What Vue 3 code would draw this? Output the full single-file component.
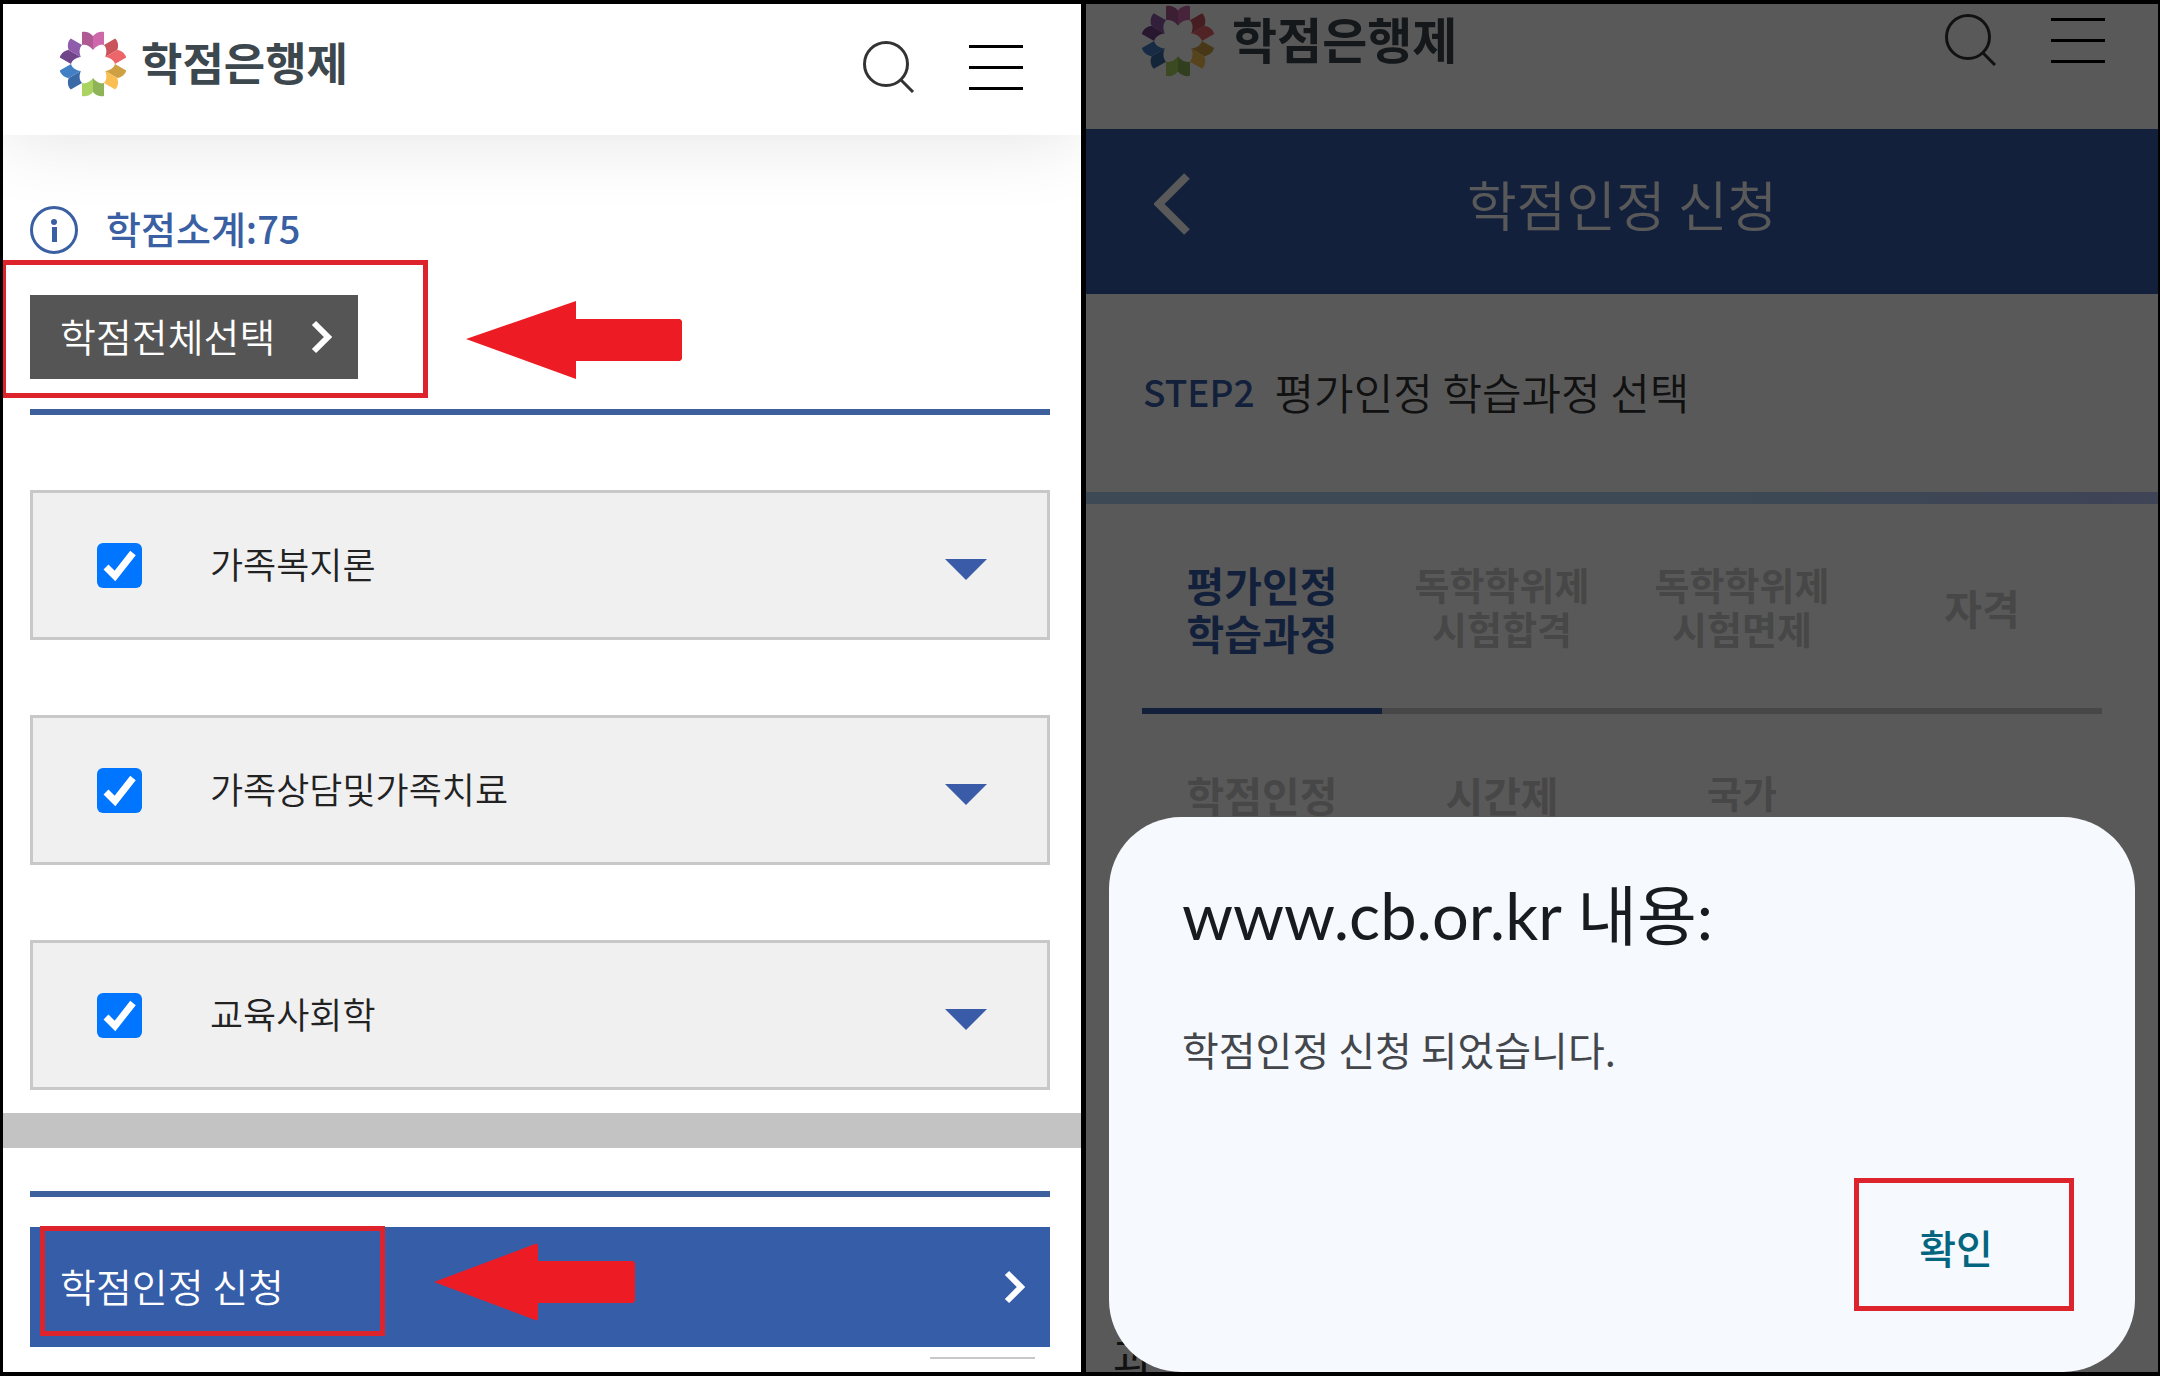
<script setup>
import { ref } from 'vue'

const petals = [
  { angle: 0, left: '#b05a94', right: '#cf68ab' },
  { angle: 60, left: '#c9545c', right: '#ec6568' },
  { angle: 120, left: '#cda043', right: '#fabf52' },
  { angle: 180, left: '#8fb457', right: '#abd362' },
  { angle: 240, left: '#3a6aa6', right: '#427fc4' },
  { angle: 300, left: '#6f4488', right: '#8f5bab' }
]

const courses = ref([
  { id: 'c1', name: '가족복지론', checked: true },
  { id: 'c2', name: '가족상담및가족치료', checked: true },
  { id: 'c3', name: '교육사회학', checked: true }
])

const tabs = [
  { label: '평가인정\n학습과정', active: true },
  { label: '독학학위제\n시험합격', compact: true },
  { label: '독학학위제\n시험면제', compact: true },
  { label: '자격' }
]

const moreTabs = [
  { label: '학점인정' },
  { label: '시간제' },
  { label: '국가', compact: true }
]
</script>

<template>
  <div class="board">
    <section class="screen list-screen">
      <header class="site-header">
        <a class="brand" href="#">
          <svg class="brand-mark" viewBox="-34 -34 68 68" aria-hidden="true">
            <g v-for="p in petals" :key="p.angle" :transform="`rotate(${p.angle})`">
              <path d="M0 -28C-3 -32 -8 -33 -11 -32L-11 -19C-7 -20 -3 -18 0 -14Z" :fill="p.left" />
              <path d="M0 -28C3 -32 8 -33 11 -32L11 -19C7 -20 3 -18 0 -14Z" :fill="p.right" />
            </g>
          </svg>
          <span>학점은행제</span>
        </a>
        <div class="tools">
          <button class="icon-button" type="button" aria-label="검색">
            <svg class="search" viewBox="0 0 52 52"><circle cx="23" cy="23" r="21.5" /><path d="M38 39L50 51" /></svg>
          </button>
          <button class="icon-button" type="button" aria-label="메뉴">
            <svg class="menu" viewBox="0 0 54 45"><path d="M0 1.5H54M0 22.5H54M0 43.5H54" /></svg>
          </button>
        </div>
      </header>

      <div class="summary">
        <svg class="info" viewBox="0 0 48 48" aria-hidden="true">
          <circle cx="24" cy="24" r="22.5" fill="none" stroke="#3a5fa3" stroke-width="3" />
          <circle cx="24" cy="16" r="3" fill="#3a5fa3" />
          <rect x="22" y="21" width="5" height="15" fill="#3a5fa3" />
        </svg>
        <strong>학점소계:75</strong>
      </div>

      <div class="select-all-row">
        <button class="select-all" type="button">
          <span>학점전체선택</span>
          <svg class="chevron" viewBox="0 0 22 34" aria-hidden="true"><path d="M3 3L17 17L3 31" /></svg>
        </button>
        <div class="mark mark-select"></div>
        <svg class="arrow arrow-select" viewBox="0 0 216 78" aria-hidden="true">
          <path d="M0 38L110 0V18H214L216 20V58L214 60H110V78Z" fill="#ed1c24" />
        </svg>
      </div>

      <ul class="courses">
        <li v-for="c in courses" :key="c.id" class="course">
          <input :id="c.id" v-model="c.checked" type="checkbox" />
          <label :for="c.id">{{ c.name }}</label>
          <svg class="caret" viewBox="0 0 42 21" aria-hidden="true"><path d="M0 0H42L21 21Z" fill="#3a5ca8" /></svg>
        </li>
      </ul>

      <div class="band"></div>

      <div class="submit-row">
        <button class="submit" type="button">
          <span>학점인정 신청</span>
          <svg class="chevron" viewBox="0 0 22 34" aria-hidden="true"><path d="M3 3L17 17L3 31" /></svg>
        </button>
        <div class="mark mark-submit"></div>
        <svg class="arrow arrow-submit" viewBox="0 0 201 78" aria-hidden="true">
          <path d="M0 39L101 1Q104 0 104 3V18H199L201 20V58L199 60H104V75Q104 78 101 77Z" fill="#ed1c24" />
        </svg>
      </div>
      <div class="next-edge"></div>
    </section>

    <section class="screen apply-screen">
      <header class="site-header">
        <a class="brand" href="#">
          <svg class="brand-mark" viewBox="-34 -34 68 68" aria-hidden="true">
            <g v-for="p in petals" :key="p.angle" :transform="`rotate(${p.angle})`">
              <path d="M0 -28C-3 -32 -8 -33 -11 -32L-11 -19C-7 -20 -3 -18 0 -14Z" :fill="p.left" />
              <path d="M0 -28C3 -32 8 -33 11 -32L11 -19C7 -20 3 -18 0 -14Z" :fill="p.right" />
            </g>
          </svg>
          <span>학점은행제</span>
        </a>
        <div class="tools">
          <button class="icon-button" type="button" aria-label="검색">
            <svg class="search" viewBox="0 0 52 52"><circle cx="23" cy="23" r="21.5" /><path d="M38 39L50 51" /></svg>
          </button>
          <button class="icon-button" type="button" aria-label="메뉴">
            <svg class="menu" viewBox="0 0 54 45"><path d="M0 1.5H54M0 22.5H54M0 43.5H54" /></svg>
          </button>
        </div>
      </header>

      <div class="title-bar">
        <button class="icon-button" type="button" aria-label="뒤로">
          <svg class="back" viewBox="0 0 36 62"><path d="M33 3L5 31L33 59" /></svg>
        </button>
        <h1>학점인정 신청</h1>
      </div>

      <div class="step">
        <strong>STEP2</strong>
        <h2>평가인정 학습과정 선택</h2>
      </div>

      <nav class="tabs">
        <a v-for="(t, i) in tabs" :key="i" href="#" class="tab" :class="{ active: t.active, compact: t.compact }">{{ t.label }}</a>
      </nav>
      <nav class="tabs more">
        <a v-for="(t, i) in moreTabs" :key="i" href="#" class="tab" :class="{ compact: t.compact }">{{ t.label }}</a>
      </nav>
      <p class="behind">과</p>

      <div class="shade"></div>
      <div class="dialog" role="alertdialog" aria-labelledby="dialog-title" aria-describedby="dialog-text">
        <h2 id="dialog-title">www.cb.or.kr 내용:</h2>
        <p id="dialog-text">학점인정 신청 되었습니다.</p>
        <div class="dialog-actions">
          <button class="confirm" type="button">확인</button>
        </div>
      </div>
    </section>
  </div>
</template>

<style>
body {
  margin: 0;
  background: #000;
}
</style>

<style scoped>
* {
  box-sizing: border-box;
}

.board {
  display: flex;
  gap: 5px;
  min-height: 100vh;
  padding: 4px 2px 4px 3px;
  background: #000;
  font-family: "Noto Sans CJK KR", "Noto Sans", sans-serif;
  color: #222;
}

.screen {
  position: relative;
  display: flex;
  flex-direction: column;
  overflow: hidden;
  background: #fff;
}

.list-screen {
  flex: 1078 1 0;
}

.apply-screen {
  flex: 1072 1 0;
}

button {
  margin: 0;
  border: 0;
  font: inherit;
  cursor: pointer;
}

h1,
h2,
p,
ul {
  margin: 0;
  padding: 0;
  font-weight: 400;
}

svg {
  display: block;
  flex: none;
}

/* header */
.site-header {
  display: flex;
  align-items: flex-start;
  justify-content: space-between;
  height: 131px;
  padding: 26px 58px 0 56px;
  background: #fff;
  box-shadow: 0 0 80px rgba(0, 0, 0, 0.12);
}

.brand {
  display: flex;
  align-items: flex-start;
  gap: 14px;
  color: #3c474e;
  font-size: 45px;
  font-weight: 700;
  line-height: 64px;
  text-decoration: none;
}

.brand-mark {
  width: 68px;
  height: 68px;
}

.tools {
  display: flex;
  align-items: center;
  gap: 54px;
  padding-top: 11px;
}

.icon-button {
  padding: 0;
  background: none;
}

.search {
  width: 52px;
  height: 52px;
  fill: none;
  stroke: #333;
  stroke-width: 3;
}

.menu {
  width: 54px;
  height: 45px;
  stroke: #000;
  stroke-width: 3;
}

.chevron {
  width: 22px;
  height: 34px;
  fill: none;
  stroke: #fff;
  stroke-width: 6;
}

/* course list */
.summary {
  display: flex;
  align-items: flex-start;
  gap: 28px;
  height: 48px;
  margin: 71px 27px 0;
  color: #3a5fa3;
  font-size: 38px;
  line-height: 44px;
}

.summary strong {
  font-weight: 500;
}

.info {
  width: 48px;
  height: 48px;
}

.select-all-row {
  position: relative;
  margin: 41px 31px 0 27px;
  padding-bottom: 30px;
  border-bottom: 6px solid #3d5f9b;
}

.select-all {
  display: flex;
  align-items: center;
  justify-content: space-between;
  width: 328px;
  height: 84px;
  padding: 0 25px 0 30px;
  background: #555;
  color: #fff;
  font-size: 39px;
  font-weight: 350;
}

.select-all span,
.submit span,
.course label {
  padding-bottom: 4px;
}

.mark {
  position: absolute;
  border: 5px solid #dd232b;
  pointer-events: none;
}

.mark-select {
  top: -35px;
  left: -29px;
  width: 427px;
  height: 138px;
}

.arrow {
  position: absolute;
  height: 78px;
}

.arrow-select {
  top: 6px;
  left: 436px;
  width: 216px;
}

.courses {
  display: flex;
  flex-direction: column;
  gap: 75px;
  margin: 75px 31px 23px 27px;
  list-style: none;
}

.course {
  display: flex;
  align-items: center;
  height: 150px;
  padding: 0 60px 0 64px;
  border: 3px solid #c8c8c8;
  background: #f0f0f1;
  font-size: 36px;
  font-weight: 350;
}

.course input {
  appearance: none;
  flex: none;
  width: 45px;
  height: 45px;
  margin: 0 68px 0 0;
  border-radius: 6px;
  background: #fff;
}

.course input:checked {
  background: #0075ff url("data:image/svg+xml,%3Csvg xmlns='http://www.w3.org/2000/svg' viewBox='0 0 45 45'%3E%3Cpath d='M9 24L18 33L36 10' fill='none' stroke='white' stroke-width='7'/%3E%3C/svg%3E");
}

.course label {
  flex: 1;
}

.caret {
  width: 42px;
  height: 21px;
  margin-top: 8px;
}

.band {
  height: 35px;
  background: #c3c3c3;
}

.submit-row {
  position: relative;
  margin: 43px 31px 0 27px;
  padding-top: 30px;
  border-top: 6px solid #3d5f9b;
}

.submit {
  display: flex;
  align-items: center;
  justify-content: space-between;
  width: 100%;
  height: 120px;
  padding: 0 24px 0 30px;
  background: #355da8;
  color: #fff;
  font-size: 39px;
  font-weight: 350;
}

.mark-submit {
  top: 29px;
  left: 10px;
  width: 345px;
  height: 110px;
}

.arrow-submit {
  top: 46px;
  left: 404px;
  width: 201px;
}

.next-edge {
  align-self: flex-end;
  width: 105px;
  height: 2px;
  margin: 10px 46px 13px 0;
  background: #c8c8c8;
}

/* application screen */
.apply-screen .site-header {
  height: 125px;
  padding: 0 53px 0 54px;
}

.apply-screen .brand {
  gap: 16px;
  font-size: 49px;
  line-height: 68px;
}

.apply-screen .brand-mark {
  width: 76px;
  height: 74px;
}

.apply-screen .tools {
  padding-top: 10px;
}

.title-bar {
  display: flex;
  align-items: center;
  height: 165px;
  padding: 0 68px 16px;
  background: #355da8;
  color: #fff;
}

.back {
  width: 36px;
  height: 62px;
  fill: none;
  stroke: #fff;
  stroke-width: 8;
}

.title-bar h1 {
  flex: 1;
  padding-right: 36px;
  font-size: 54px;
  font-weight: 350;
  text-align: center;
}

.step {
  display: flex;
  align-items: center;
  gap: 20px;
  height: 198px;
  padding: 0 57px 4px;
  color: #355da8;
  font-size: 37px;
}

.step strong {
  font-weight: 500;
}

.step h2 {
  color: #333;
  font-size: 43px;
  font-weight: 350;
}

.tabs {
  display: grid;
  grid-template-columns: repeat(4, 1fr);
  height: 210px;
  margin: 0 56px;
  border-bottom: 6px solid #cbcbcb;
}

.step + .tabs {
  position: relative;
  margin-top: 12px;
}

.step + .tabs::before {
  content: "";
  position: absolute;
  top: -12px;
  left: -56px;
  right: -56px;
  height: 12px;
  background: linear-gradient(90deg, #aed0f3 60%, #b4c2f6);
}

.tab {
  display: flex;
  align-items: center;
  justify-content: center;
  margin-bottom: -6px;
  padding-bottom: 4px;
  color: #cbcbcb;
  font-size: 41px;
  font-weight: 700;
  line-height: 48px;
  text-align: center;
  text-decoration: none;
  white-space: pre-line;
}

.tab.compact {
  padding-bottom: 6px;
  font-size: 38px;
  line-height: 44px;
}

.tab.active {
  padding: 4px 0 0;
  border-bottom: 6px solid #355da8;
  color: #355da8;
}

.tabs.more {
  height: 160px;
  border: 0;
}

.more .tab {
  align-items: flex-start;
  padding-top: 56px;
}

.behind {
  margin: auto 27px 0;
  color: #333;
  font-size: 44px;
  line-height: 32px;
}

.shade {
  position: absolute;
  inset: 0;
  background: rgba(0, 0, 0, 0.65);
}

.dialog {
  position: absolute;
  right: 23px;
  bottom: 0;
  left: 23px;
  display: flex;
  flex-direction: column;
  height: 555px;
  padding: 56px 61px 61px 73px;
  border-radius: 72px;
  background: #f6f9fe;
}

.dialog h2 {
  color: #191c1e;
  font-family: Lato, "Noto Sans CJK KR", sans-serif;
  font-size: 65px;
  line-height: 84px;
}

.dialog p {
  margin-top: 62px;
  color: #43474b;
  font-size: 40px;
  line-height: 60px;
}

.dialog-actions {
  display: flex;
  justify-content: flex-end;
  margin-top: auto;
}

.confirm {
  width: 220px;
  height: 133px;
  padding: 4px 16px 0 0;
  border: 5px solid #dd232b;
  background: none;
  color: #04657f;
  font-size: 40px;
  font-weight: 500;
}
</style>
